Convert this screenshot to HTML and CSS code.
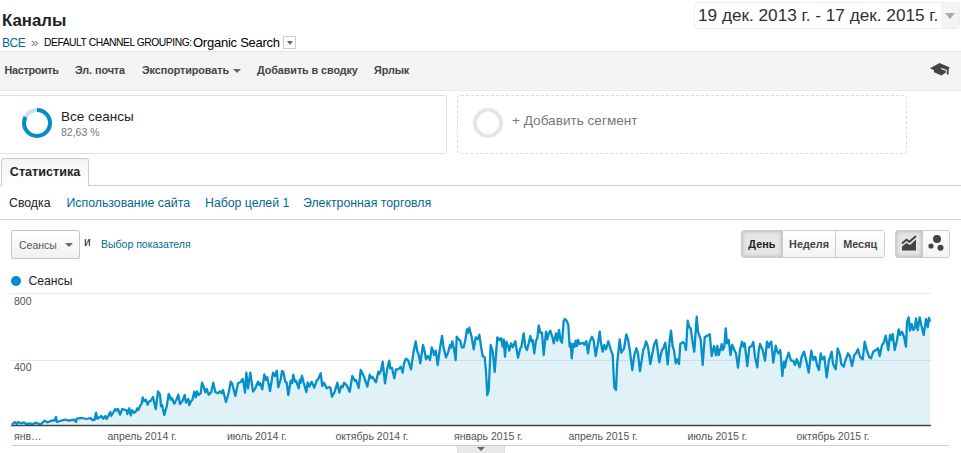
FILE: index.html
```
<!DOCTYPE html>
<html lang="ru">
<head>
    <meta charset="UTF-8">
    <title>Каналы</title>
    <link rel="stylesheet" href="styles.css">
</head>
<body>
    <header class="page-header">
        <div class="heading">
            <h1>Каналы</h1>
            <div class="breadcrumb">
                <a href="#" class="crumb-all">ВСЕ</a>
                <span class="crumb-sep">»</span>
                <span class="crumb-group">DEFAULT CHANNEL GROUPING:</span>
                <span class="crumb-value">Organic Search</span>
                <button class="crumb-toggle"><i class="arrow"></i></button>
            </div>
        </div>
        <div class="date-range">
            <span class="date-text">19 дек. 2013 г. - 17 дек. 2015 г.</span>
            <span class="date-toggle"><i class="arrow"></i></span>
        </div>
    </header>

    <nav class="toolbar">
        <a class="t-customize">Настроить</a>
        <a class="t-email">Эл. почта</a>
        <a class="t-export">Экспортировать <i class="arrow"></i></a>
        <a class="t-add">Добавить в сводку</a>
        <a class="t-shortcut">Ярлык</a>
        <svg class="education" width="20" height="14" viewBox="0 0 20 14">
            <path d="M0 5.2 9.5 0 20 4.6 18.6 5.8V11.6H16.8V6.9L11.5 5 10.8 6 15.8 7.7V9.6L11.6 12.4 4 9.2V7.2Z" fill="#444"/>
        </svg>
    </nav>

    <section class="segments">
        <div class="segment">
            <svg class="ring" width="30" height="30" viewBox="0 0 30 30">
                <circle cx="15" cy="15" r="13" fill="none" stroke="#c5e3f2" stroke-width="4"/>
                <circle cx="15" cy="15" r="13" fill="none" stroke="#058dc7" stroke-width="4" pathLength="100" stroke-dasharray="82.63 100" transform="rotate(-90 15 15)"/>
            </svg>
            <div>
                <div class="segment-name">Все сеансы</div>
                <div class="segment-share">82,63 %</div>
            </div>
        </div>
        <div class="segment segment-add">
            <svg class="ring" width="30" height="30" viewBox="0 0 30 30">
                <circle cx="15" cy="15" r="13" fill="none" stroke="#e5e5e5" stroke-width="4"/>
                <path d="M15 0V4" stroke="#fff"/>
            </svg>
            <div class="segment-name">+ Добавить сегмент</div>
        </div>
    </section>

    <div class="tabs">
        <div class="tab">Статистика</div>
    </div>

    <nav class="subnav">
        <span class="s-summary">Сводка</span>
        <a href="#" class="s-usage">Использование сайта</a>
        <a href="#" class="s-goals">Набор целей 1</a>
        <a href="#" class="s-ecommerce">Электронная торговля</a>
    </nav>

    <div class="controls">
        <button class="metric">Сеансы <i class="arrow"></i></button>
        <span class="and">и</span>
        <a href="#" class="pick-metric">Выбор показателя</a>
        <div class="button-group period">
            <button class="active">День</button>
            <button>Неделя</button>
            <button>Месяц</button>
        </div>
        <div class="button-group views">
            <button class="active">
                <svg width="16" height="16" viewBox="0 0 16 16">
                    <path d="M1 8.5 5.5 4.8 8.5 6.8 15 1" fill="none" stroke="#444" stroke-width="2"/>
                    <path d="M1 11.6 5.5 8 9 10 15 4.6V15.5H1Z" fill="#444"/>
                </svg>
            </button>
            <button>
                <svg width="16" height="16" viewBox="0 0 16 16" fill="#444">
                    <circle cx="9" cy="4" r="4"/>
                    <circle cx="3" cy="11" r="2.6"/>
                    <circle cx="12.5" cy="12.7" r="3"/>
                </svg>
            </button>
        </div>
    </div>

    <div class="legend"><i class="dot"></i>Сеансы</div>

    <div class="chart">
        <svg class="plot" width="920" height="136" viewBox="11 291 920 136">
            <path d="M11 293.5H931M11 360.5H931" stroke="#e9e9e9"/>
            <path class="area" id="area"/>
            <path class="line" id="line"/>
            <path d="M11 425.5H931" stroke="#444" stroke-width="1.3"/>
            <text x="14" y="305">800</text>
            <text x="14" y="371">400</text>
        </svg>
        <svg class="axis" width="920" height="18" viewBox="11 427 920 18">
            <text x="14" y="440">янв…</text>
            <text x="107.500" y="440">апрель 2014 г.</text>
            <text x="227" y="440">июль 2014 г.</text>
            <text x="335.500" y="440">октябрь 2014 г.</text>
            <text x="454" y="440">январь 2015 г.</text>
            <text x="568.500" y="440">апрель 2015 г.</text>
            <text x="687.500" y="440">июль 2015 г.</text>
            <text x="796.500" y="440">октябрь 2015 г.</text>
        </svg>
    </div>
    <div class="chart-footer"><div class="handle"><i class="arrow"></i></div></div>

    <script src="chart.js"></script>
</body>
</html>
```
FILE: styles.css
```
* {
    margin: 0;
    padding: 0;
    box-sizing: border-box;
}

body {
    width: 961px;
    height: 453px;
    overflow: hidden;
    background: #fff;
    color: #222;
    font-family: "Liberation Sans", Arial, sans-serif;
    font-size: 13px;
}

a {
    color: #006a94;
    text-decoration: none;
}

button {
    font-family: inherit;
    cursor: pointer;
}

svg {
    display: block;
}

.arrow {
    display: inline-block;
    border: 4px solid transparent;
    border-top-color: #666;
    border-bottom: 0;
}

.page-header {
    display: flex;
    justify-content: space-between;
    height: 51px;
}

.heading {
    padding: 11px 0 0 2px;
}

h1 {
    font-size: 16.8px;
    line-height: 20px;
}

.breadcrumb {
    display: flex;
    align-items: center;
    height: 15px;
    margin-top: 4px;
    color: #000;
    white-space: nowrap;
}

.crumb-all {
    width: 29px;
    font-size: 12px;
    letter-spacing: -0.2px;
}

.crumb-sep {
    width: 13px;
    color: #777;
}

.crumb-group {
    width: 149px;
    font-size: 10.3px;
    letter-spacing: -0.45px;
}

.crumb-value {
    width: 90px;
    letter-spacing: -0.25px;
}

.crumb-toggle {
    display: flex;
    align-items: center;
    justify-content: center;
    width: 13px;
    height: 13px;
    border: 1px solid #ccc;
    background: #fff;
}

.crumb-toggle .arrow {
    border-width: 4px 3px 0;
}

.date-range {
    display: flex;
    width: 266px;
    height: 27px;
    margin: 2px 1px 0 0;
    border: 1px solid #eee;
    border-radius: 4px;
    overflow: hidden;
}

.date-text {
    flex: 1;
    padding-left: 3px;
    color: #263238;
    font-size: 17.2px;
    line-height: 25px;
    white-space: nowrap;
}

.date-toggle {
    display: flex;
    align-items: center;
    justify-content: center;
    width: 18px;
    background: #f4f4f4;
}

.date-toggle .arrow {
    border-width: 6px 5.5px 0;
    border-top-color: #aaa;
}

.toolbar {
    display: flex;
    align-items: center;
    height: 40px;
    padding: 0 11px 2px 4.5px;
    border-top: 1px solid #e5e5e5;
    border-bottom: 1px solid #e8e8e8;
    background: #f4f4f4;
    font-size: 10.8px;
    font-weight: bold;
    letter-spacing: -0.08px;
    white-space: nowrap;
}

.toolbar a {
    color: #444;
}

.toolbar .arrow {
    margin: 0 0 1px 1px;
}

.t-customize {
    width: 70.5px;
    letter-spacing: -0.3px;
}

.t-email {
    width: 67px;
}

.t-export {
    width: 115px;
}

.t-add {
    width: 117px;
}

.education {
    margin-left: auto;
}

.segments {
    display: flex;
    gap: 10px;
    padding-top: 4px;
}

.segment {
    display: flex;
    width: 447px;
    height: 59px;
    padding: 12px 0 0 22px;
    border: 1px solid #e2e2e2;
    border-left: 0;
    border-radius: 0 3px 3px 0;
}

.ring {
    margin-right: 9px;
}

.segment-name {
    font-size: 13.5px;
    line-height: 18px;
}

.segment-share {
    color: #777;
    font-size: 10.5px;
    line-height: 12px;
}

.segment-add {
    width: 450px;
    padding-left: 15px;
    border: 1px dashed #ddd;
    border-radius: 4px;
    color: #777;
}

.segment-add .segment-name {
    padding-top: 4px;
    font-size: 13.6px;
}

.tabs {
    height: 32px;
    padding: 4px 0 0 1px;
    border-bottom: 1px solid #ccc;
}

.tab {
    width: 88px;
    height: 28px;
    border: 1px solid #ccc;
    border-bottom: 0;
    border-radius: 3px 3px 0 0;
    background: linear-gradient(#f4f4f4, #fff);
    font-size: 12.6px;
    font-weight: bold;
    line-height: 27px;
    text-align: center;
}

.subnav {
    display: flex;
    height: 34px;
    padding-left: 9px;
    border-bottom: 1px solid #d5d5d5;
    font-size: 12.3px;
    line-height: 34px;
    white-space: nowrap;
}

.s-summary {
    width: 57.5px;
}

.s-usage {
    width: 138.5px;
}

.s-goals {
    width: 98px;
}

.controls {
    display: flex;
    height: 39px;
    padding: 10px 11px 0;
    font-size: 10.5px;
}

.metric {
    display: flex;
    align-items: center;
    justify-content: space-between;
    width: 69px;
    height: 29px;
    padding: 0 6px 0 7px;
    border: 1px solid #c6c6c6;
    border-radius: 2px;
    background: linear-gradient(#fff, #f1f1f1);
    color: #555;
    font-size: 10.5px;
}

.and {
    width: 21px;
    padding-left: 4px;
    font-size: 12px;
    line-height: 24px;
}

.pick-metric {
    line-height: 29px;
}

.button-group {
    display: flex;
    height: 28px;
    border: 1px solid #ccc;
    border-radius: 3px;
    overflow: hidden;
}

.button-group button {
    display: flex;
    align-items: center;
    justify-content: center;
    border: 0;
    border-right: 1px solid #ccc;
    background: linear-gradient(#fff, #f3f3f3);
    color: #444;
    font-size: 10.8px;
    font-weight: bold;
}

.button-group button:last-child {
    border-right: 0;
}

.button-group .active {
    background: #e6e6e6;
    box-shadow: inset 0 0 4px #aaa;
    color: #222;
}

.period {
    width: 144px;
    margin-left: auto;
}

.period button {
    width: 48px;
}

.period button:first-child {
    width: 41px;
}

.period button:nth-child(2) {
    width: 54px;
}

.views {
    width: 55px;
    margin-left: 10px;
}

.views button {
    flex: 1;
}

.views svg {
    margin-top: -2px;
}

.legend {
    display: flex;
    align-items: center;
    height: 32px;
    padding: 12px 0 0 11px;
    font-size: 12.2px;
    line-height: 20px;
}

.dot {
    width: 10px;
    height: 10px;
    margin-right: 7.5px;
    border-radius: 50%;
    background: #058dc7;
}

.chart {
    padding-left: 11px;
}

.chart text {
    fill: #545454;
    font-size: 10.5px;
}

.line {
    fill: none;
    stroke: #0590ca;
    stroke-width: 2.3;
    stroke-linejoin: round;
}

.area {
    fill: rgba(5, 141, 199, 0.12);
}

.chart-footer {
    display: flex;
    justify-content: center;
    height: 9px;
    margin: 0 12px;
    border-top: 1px solid #ccc;
}

.handle {
    width: 48px;
    height: 8px;
    border: 1px solid #ddd;
    border-width: 0 1px;
    background: #e9e9e9;
    line-height: 0;
    text-align: center;
}

.handle .arrow {
    margin-top: 1px;
}
```
FILE: chart.js
```
// x,y pairs of the sessions line, in plot units
const points = `
12,424.5 14.7,422 16.7,424 18,422 20.7,423.3 24,422.3 26,424 30,423.3 32.7,424.3 35.3,422.7 40.7,424.3 44.7,420.7 47.3,422.3
52.7,420.3 54.5,420.7 56,417 57,422 61.3,420.7 65.3,419.7 68.7,420.7 74,419.7 76,422 76.7,418.7 82,418 86.7,419 90,418 92.7,420
94.7,419.7 96,412.7 97.3,418.7 101.3,416 103.3,418.7 105.3,416 106.7,419 110.3,412 111.3,416 115.3,409 116.7,410.7 118,409
120,414.7 122.3,409 126.7,410.3 127.3,414 129.3,408.3 130.7,415.3 132.3,410.3 134,412.7 136,411.3 137.3,408.3 138.3,410
140.7,404.7 141.7,403.7 142.7,397.3 144,401 145.7,399.7 147.7,404.7 149,401.3 150.7,401 153,397 155.7,409 158,391.3 160,394.7
161,406.3 162,404.7 164.3,415 166.7,406.3 168.7,394 170,396.3 170.7,399.7 172,398.3 174.3,403.7 176.3,400 178.3,394.7 180,404
182.3,401.3 184.7,395 186,402.7 188.3,399 189.3,405 191.3,400.7 192.3,400 194.3,391.7 195.7,397.3 197,391.3 198.3,395
200.7,393.3 202,382.7 203.7,386.7 205.3,392.3 206.7,389 208.7,394.7 211,392.7 213.3,382.7 215.3,392 218,393.3 220,391.3
221.7,393.3 223,390 226,402 228.7,392.7 230.7,381.7 232.3,384 235.3,396 238,383.3 240.7,382 242.7,379 243.7,383.3 245,392.7
246.3,372.7 248,388.3 250.3,372.7 253,391.7 255.3,388.3 258,381.7 259.3,385 260.3,383.3 262.3,389.3 264.3,374.3 266,380
267.3,377.3 270,391 273,372.7 275,376 276.7,370.7 278.3,387.3 280.7,379.3 282,371 283.3,371.7 285.3,381.7 286.7,382.7 288.3,395
290.7,380.7 292,383.3 293.3,374.7 295,381.7 296,380.7 298.7,388.3 299.7,380 300.7,382.7 302,375.7 303.7,382.7 306.3,392
307.7,382.3 309.3,386.7 311.7,381.7 314.3,387.7 316.7,380.7 318.7,378.3 320.7,373.3 322.3,386 324,382.7 326.7,388.3 328.7,387.3
330.3,387.3 332,396.7 334.7,391.7 337.3,382.7 339.3,392.7 341.3,386 342.7,387.3 344,382.7 346.7,385.3 349.7,391.7 352.3,376
355,381 356,380 358.7,388 360.7,370 362.7,374 364,376.7 367.3,386.7 369.7,374.7 371.3,378 372.3,376.7 376,382.3 378.3,371.7
379.3,374 381,370.7 382.7,361.7 385,383.3 387.3,368.3 389.3,360.7 390.3,368.3 392,368 394.3,378.3 396,369.3 398.3,369.3
400.7,366.7 402.7,372.7 404,363.3 406,358.7 408.3,360.7 411,369.3 413.3,353.3 415.7,341.3 417.3,351.7 418.3,353.3 420.3,363.3
423,345 424.7,351.7 426,359.3 427.7,356 430,360 431.7,347.3 433.3,351.7 434,355 435.7,350.7 437.7,365 439.7,350 442,336
443.7,348.3 446,357.3 448,352.7 450,345 451,347.7 452.3,341.3 454,349.3 455.7,360 456.7,336.7 458.7,339.3 460.3,340.7
461.7,347.3 463.7,347.3 465.3,340 467,329.3 468,332.7 469.3,327.7 471.7,337.3 473.7,349.3 475.7,337.3 477.7,339.3 479.3,334.7
481.3,348.3 482.7,356 484.7,357.3 486,371.7 487.3,395.3 488.7,390 490.7,345 492.7,351.7 494.7,372 497.3,337.3 499.3,340
501,338.3 502.7,346.7 503.7,339.3 505,356.7 506.3,341.7 508,346 509.3,350.7 511,343.3 512.7,347.3 515.3,341.3 518,357.7
520.3,348.3 521.3,347.3 523.7,333.3 525.3,346.7 527,350 528.7,343.3 530.3,336 531.7,341.7 532.7,340 534.3,353.3 536,340.7
537.3,338.3 538.7,325.3 540.3,332.7 542,332.7 543.7,355 546,331.7 547.3,339.3 548.7,333.3 550.3,330.7 552.7,338.3 553.7,343.3
556,333.3 557.3,340.7 559,330 560.7,340.7 562,342.7 563.7,320.7 565,319 566.7,320.7 568.3,325 569.7,346.7 570.7,343.3
571.7,358.3 573.3,344 574.7,346.7 575.7,340.7 577,346 578,340 579.7,344 582.7,342.7 584.3,344.7 586.3,341.3 588,353.3
589.7,341.7 592,336.7 593.7,340.7 595.7,356 597.7,345 599.7,331.7 601,343.3 602.7,351.7 604.3,345 606,349.3 608.3,341.3
610.7,349.3 612.7,355 614.3,387.3 616,390 617.3,361.7 619.7,339.3 621.3,352.7 623,350 624,348.7 626.3,334.3 628,339.3
630,351.7 632.3,370 634.3,355 636.3,348.3 638,353.3 640,371 642,358.3 643.3,349.3 644.3,348.3 646,341.3 648,346.7 650.3,364
652.7,351.7 654.3,344 656.3,340 659.3,362.3 661.7,350.7 663.3,348.3 665.3,342.7 667.7,364.3 669.7,340 671,330.7 672.7,346.7
674,350 675.7,363.3 677.3,359.3 679,364 680.3,344 683,342 684.7,344 686,350 687.7,320.7 689.3,327.3 690.7,328.3 692.7,342.7
694.3,351.7 696.7,316.7 698,331.7 700.7,339.3 702.7,365 704.7,337.3 706.7,336 709.7,334.3 711.7,356 714,346 716,355.3
717.3,346 718.7,355 721.7,344 722.7,350 724.3,346.7 725.7,328.3 727,343.3 728.7,340 730.5,355 732.2,345 734.3,350 736,353.3
738,367.7 740,350 742,341.7 743.7,346.7 744.7,343.3 747.3,366 749.3,347.3 751.7,346 753.3,342 755,356.7 757.3,367.3
758.7,350.7 760,344 762.7,350 765,360.7 767,341.7 768.7,347.3 769.7,343.3 771.3,341.7 773.3,362.7 775.7,345.7 777.3,351.7
778.3,353.3 780.3,350 782.3,376 784,361.7 785,367.3 786.3,360 788.7,352.7 791,360.7 793.3,360.7 795,365 796.7,359 799.7,367.3
801.7,356.7 804,351.7 806.3,360.7 808.7,372.7 811.3,350.7 813.3,360 815.3,356.7 817,365 819,370 820.7,353.3 822.3,359.3
824.3,356.7 826.7,377.3 828.7,361.7 831.7,351.7 833,364 835.7,369.3 837.7,348.3 840,355 841.3,364 843.7,366.7 845,361.7
848,353.3 850,356.7 852,366 854.3,355 856,353.3 858,349.3 860,356.7 862.7,359.3 864.7,341.7 866.7,350 869.3,357.3 871,358.3
873.3,351.7 876,350 878,348.3 879.7,356 882,345 883.7,342.7 885.7,335.7 888.3,350 890,335 891.3,340 892.7,334 894.7,350
896.7,341.7 898.7,329.3 900.3,335 902,331.7 904,336.7 906,346.7 907,321.7 908.7,317.3 910,330.7 911.7,324 913.3,330
914.7,328.3 916,318.3 917.7,330 919.7,317.3 921.3,325 923.7,335 926,319 927.7,327.3 929,318 930,321.7`.trim().split(/\s+/);

const path = 'M' + points.join('L');

document.getElementById('line').setAttribute('d', path);
document.getElementById('area').setAttribute('d', path + 'V425H12Z');
```
